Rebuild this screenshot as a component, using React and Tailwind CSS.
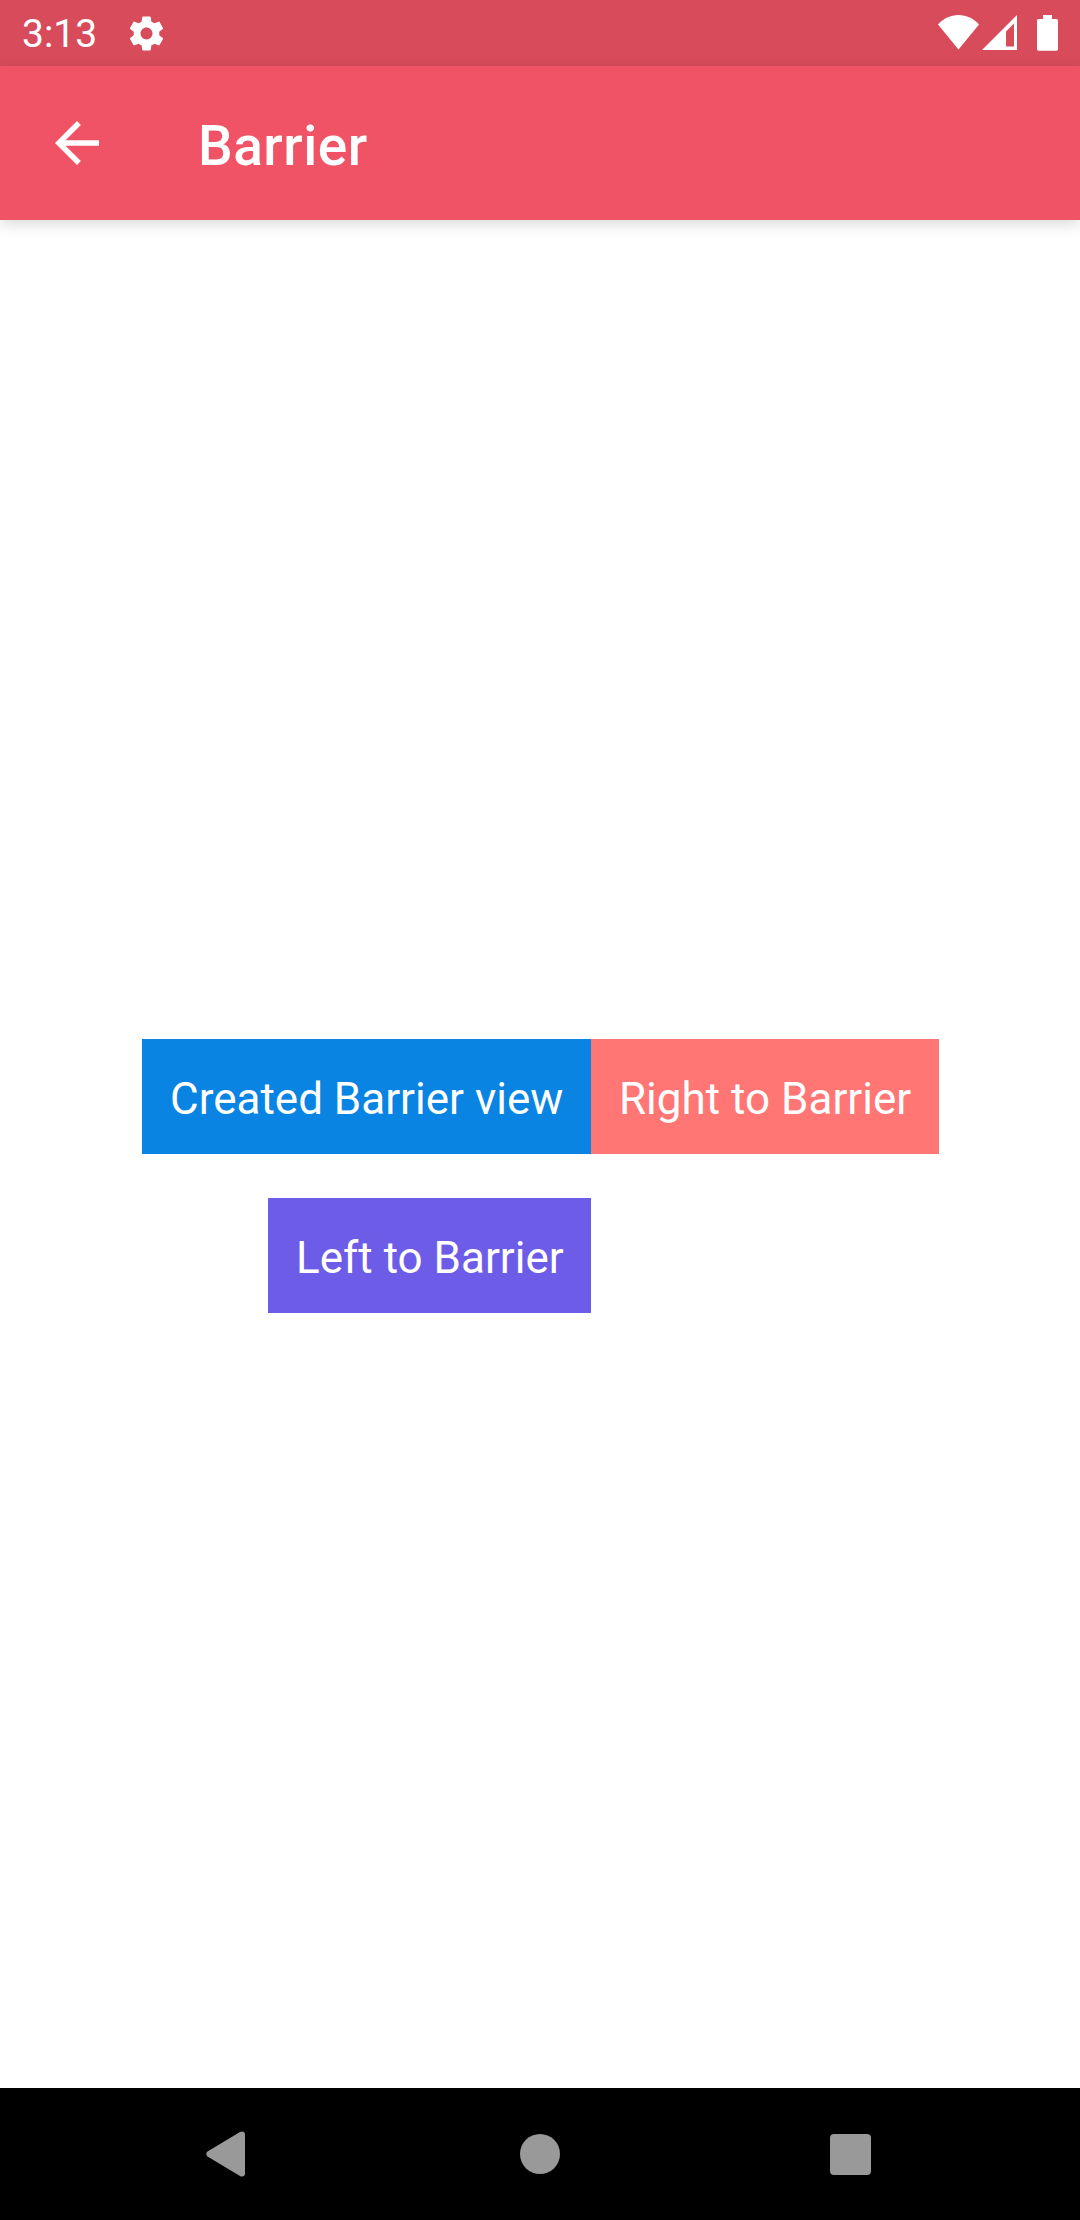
function StatusBar() {
  return (
    <header className="flex h-[66px] items-start bg-[#d74b5b] text-white">
      <span className="ml-[22px] mt-3 w-[75px] text-[39px] leading-[45px]">3:13</span>
      <svg className="ml-[29px] mt-[13px] h-[41px] w-[41px]" viewBox="0 0 24 24" fill="currentColor">
        <path d="M19.43 12.98c.04-.32.07-.64.07-.98s-.03-.66-.07-.98l2.11-1.65c.19-.15.24-.42.12-.64l-2-3.46c-.12-.22-.39-.3-.61-.22l-2.49 1c-.52-.4-1.08-.73-1.69-.98l-.38-2.65C14.46 2.18 14.25 2 14 2h-4c-.25 0-.46.18-.49.42l-.38 2.65c-.61.25-1.17.59-1.69.98l-2.49-1c-.23-.09-.49 0-.61.22l-2 3.46c-.13.22-.07.49.12.64l2.11 1.65c-.04.32-.07.65-.07.98s.03.66.07.98l-2.11 1.65c-.19.15-.24.42-.12.64l2 3.46c.12.22.39.3.61.22l2.49-1c.52.4 1.08.73 1.69.98l.38 2.65c.03.24.24.42.49.42h4c.25 0 .46-.18.49-.42l.38-2.65c.61-.25 1.17-.59 1.69-.98l2.49 1c.23.09.49 0 .61-.22l2-3.46c.12-.22.07-.49-.12-.64l-2.11-1.65zM12 15.5c-1.93 0-3.5-1.57-3.5-3.5s1.57-3.5 3.5-3.5 3.5 1.57 3.5 3.5-1.57 3.5-3.5 3.5z" />
      </svg>
      <div className="ml-auto mr-[22px] mt-[15px] flex">
        <svg className="h-9 w-[41px]" viewBox="0 0 41 36" fill="currentColor">
          <path d="M0 9.5C5.500 3.500 12.500 0 20.500 0S35.500 3.500 41 9.500L20.500 34.500Z" />
        </svg>
        <svg className="ml-[3px] h-9 w-[35px]" viewBox="0 0 35 36" fill="currentColor" fillRule="evenodd">
          <path d="M35 0V35H0ZM32 8.500L24 16.500V31.500H32Z" />
        </svg>
        <svg className="ml-5 h-9 w-[21px]" viewBox="0 0 21 36" fill="currentColor">
          <path d="M6 0H15V4H19.500Q21 4 21 5.500V34Q21 35.700 19.500 35.700H1.500Q0 35.700 0 34V5.500Q0 4 1.500 4H6Z" />
        </svg>
      </div>
    </header>
  );
}

function Toolbar() {
  return (
    <div className="z-10 flex h-[154px] items-center bg-[#f05365] text-white shadow-[0_4px_14px_rgba(0,0,0,0.15)]">
      <svg className="ml-11 h-[66px] w-[66px]" viewBox="0 0 24 24" fill="currentColor">
        <path d="M20 11H7.830l5.590-5.590L12 4l-8 8 8 8 1.410-1.410L7.830 13H20v-2z" />
      </svg>
      <h1 className="ml-[88px] mt-[5px] text-[55px] leading-[64px] font-medium tracking-[0.5px]">Barrier</h1>
    </div>
  );
}

function NavigationBar() {
  return (
    <nav className="flex h-[132px] items-center bg-black text-[#999999]">
      <svg className="ml-[206px] h-[46px] w-[39px]" viewBox="0 0 39 46" fill="currentColor">
        <path d="M1.500 20.500L34 1C36.500 -.3 39 .8 39 3.500V42.500C39 45.200 36.500 46.300 34 45L1.500 25.500C0 24.500 0 21.500 1.500 20.500Z" />
      </svg>
      <span className="ml-[275px] h-10 w-10 rounded-full bg-[#999999]" />
      <span className="ml-[270px] h-[41px] w-[41px] rounded-[4px] bg-[#999999]" />
    </nav>
  );
}

export default function App() {
  return (
    <div className="flex h-[2220px] w-[1080px] flex-col overflow-hidden bg-white font-[Roboto,sans-serif]">
      <StatusBar />
      <Toolbar />
      <main className="flex-1 pt-[819px] text-[44px] leading-[52px] whitespace-nowrap text-white">
        <div className="ml-[142px] flex">
          <div className="flex w-[449px] flex-col items-end gap-11">
            <div className="h-[115px] w-[449px] bg-[#0984e3] px-7 pt-[34px]">Created Barrier view</div>
            <div className="h-[115px] w-[323px] bg-[#6c5ce7] px-7 pt-[34px]">Left to Barrier</div>
          </div>
          <div className="h-[115px] w-[348px] bg-[#ff7675] px-7 pt-[34px]">Right to Barrier</div>
        </div>
      </main>
      <NavigationBar />
    </div>
  );
}
